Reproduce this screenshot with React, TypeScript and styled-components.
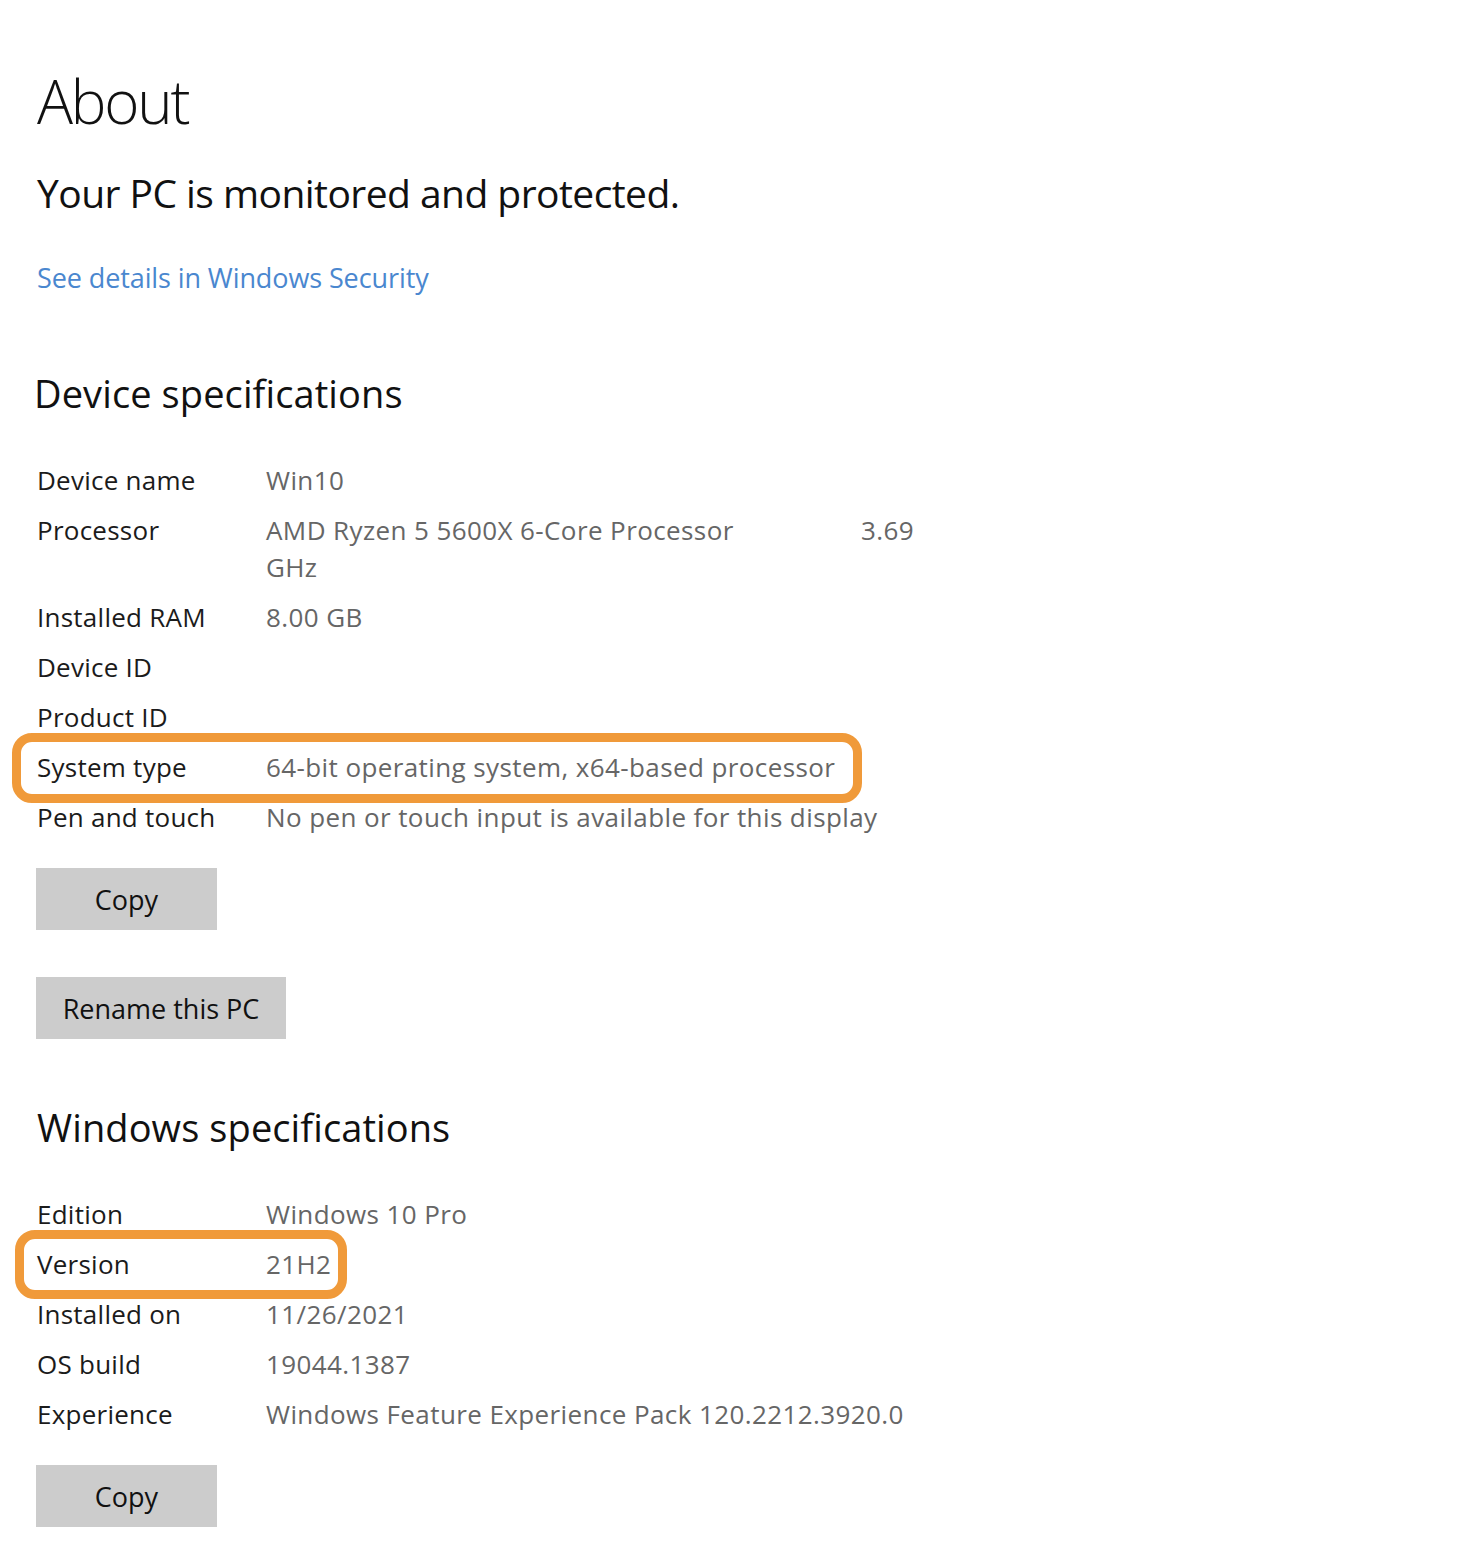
import React from "react";
import styled, { createGlobalStyle } from "styled-components";

const Global = createGlobalStyle`
  html, body {
    margin: 0;
    padding: 0;
    background: #ffffff;
  }
  body {
    font-family: "Open Sans", "Noto Sans", "Liberation Sans", sans-serif;
    color: #1a1a1a;
  }
`;

const Page = styled.main`
  display: flex;
  flex-direction: column;
  align-items: flex-start;
  padding: 61px 0 22px 37px;
  min-height: 1548px;
  box-sizing: border-box;
`;

const Title = styled.h1`
  margin: 0;
  font-size: 60px;
  font-weight: 300;
  line-height: 80px;
  letter-spacing: -2.2px;
  color: #111;
`;

const Status = styled.div`
  margin-top: 27px;
  font-size: 39px;
  font-weight: 400;
  line-height: 50px;
  letter-spacing: -0.55px;
  color: #111;
`;

const Link = styled.a`
  margin-top: 40px;
  font-size: 27px;
  line-height: 40px;
  letter-spacing: -0.1px;
  color: #4a87cf;
  text-decoration: none;
  cursor: pointer;
`;

const Heading = styled.h2<{ $gap: number; $shift?: number }>`
  margin: ${(p) => p.$gap}px 0 0 ${(p) => p.$shift ?? 0}px;
  font-size: 38px;
  font-weight: 400;
  line-height: 50px;
  letter-spacing: 0.1px;
  color: #111;
`;

const Specs = styled.div`
  margin-top: 44px;
  display: flex;
  flex-direction: column;
  gap: 13px;
`;

const Row = styled.div`
  position: relative;
  display: flex;
  font-size: 26px;
  line-height: 37px;
`;

const Label = styled.div`
  width: 229px;
  flex: none;
  letter-spacing: 0.25px;
  color: #1b1b1b;
`;

const Value = styled.div`
  letter-spacing: 0.4px;
  color: #666666;
`;

const SplitLine = styled.div`
  width: 648px;
  display: flex;
  justify-content: space-between;
`;

const Highlight = styled.span<{ $left: number; $width: number; $top: number; $bottom: number }>`
  position: absolute;
  left: ${(p) => p.$left}px;
  width: ${(p) => p.$width}px;
  top: ${(p) => p.$top}px;
  bottom: ${(p) => p.$bottom}px;
  border: 9px solid #f09a3a;
  border-radius: 20px;
  box-sizing: border-box;
  pointer-events: none;
`;

const Button = styled.button<{ $gap: number; $width: number }>`
  margin-top: ${(p) => p.$gap}px;
  width: ${(p) => p.$width}px;
  height: 62px;
  margin-left: -1px;
  border: none;
  background: #cccccc;
  color: #111;
  font-family: inherit;
  font-size: 27px;
  padding: 0;
  cursor: pointer;
`;

type Spec = {
  label: string;
  value?: React.ReactNode;
  mark?: { left: number; width: number; top: number; bottom: number };
};

const device: Spec[] = [
  { label: "Device name", value: "Win10" },
  {
    label: "Processor",
    value: (
      <>
        <SplitLine>
          <span>AMD Ryzen 5 5600X 6-Core Processor</span>
          <span>3.69</span>
        </SplitLine>
        GHz
      </>
    ),
  },
  { label: "Installed RAM", value: "8.00 GB" },
  { label: "Device ID" },
  { label: "Product ID" },
  {
    label: "System type",
    value: "64-bit operating system, x64-based processor",
    mark: { left: -25, width: 850, top: -16, bottom: -17 },
  },
  { label: "Pen and touch", value: "No pen or touch input is available for this display" },
];

const windows: Spec[] = [
  { label: "Edition", value: "Windows 10 Pro" },
  { label: "Version", value: "21H2", mark: { left: -22, width: 332, top: -16, bottom: -16 } },
  { label: "Installed on", value: "11/26/2021" },
  { label: "OS build", value: "19044.1387" },
  { label: "Experience", value: "Windows Feature Experience Pack 120.2212.3920.0" },
];

function SpecList({ items }: { items: Spec[] }) {
  return (
    <Specs>
      {items.map((s) => (
        <Row key={s.label}>
          {s.mark && (
            <Highlight $left={s.mark.left} $width={s.mark.width} $top={s.mark.top} $bottom={s.mark.bottom} />
          )}
          <Label>{s.label}</Label>
          <Value>{s.value}</Value>
        </Row>
      ))}
    </Specs>
  );
}

export default function App() {
  return (
    <>
      <Global />
      <Page>
        <Title>About</Title>
        <Status>Your PC is monitored and protected.</Status>
        <Link>See details in Windows Security</Link>

        <Heading $gap={70} $shift={-3}>Device specifications</Heading>
        <SpecList items={device} />
        <Button $gap={32} $width={181}>Copy</Button>
        <Button $gap={47} $width={250}>Rename this PC</Button>

        <Heading $gap={63}>Windows specifications</Heading>
        <SpecList items={windows} />
        <Button $gap={32} $width={181}>Copy</Button>
      </Page>
    </>
  );
}
